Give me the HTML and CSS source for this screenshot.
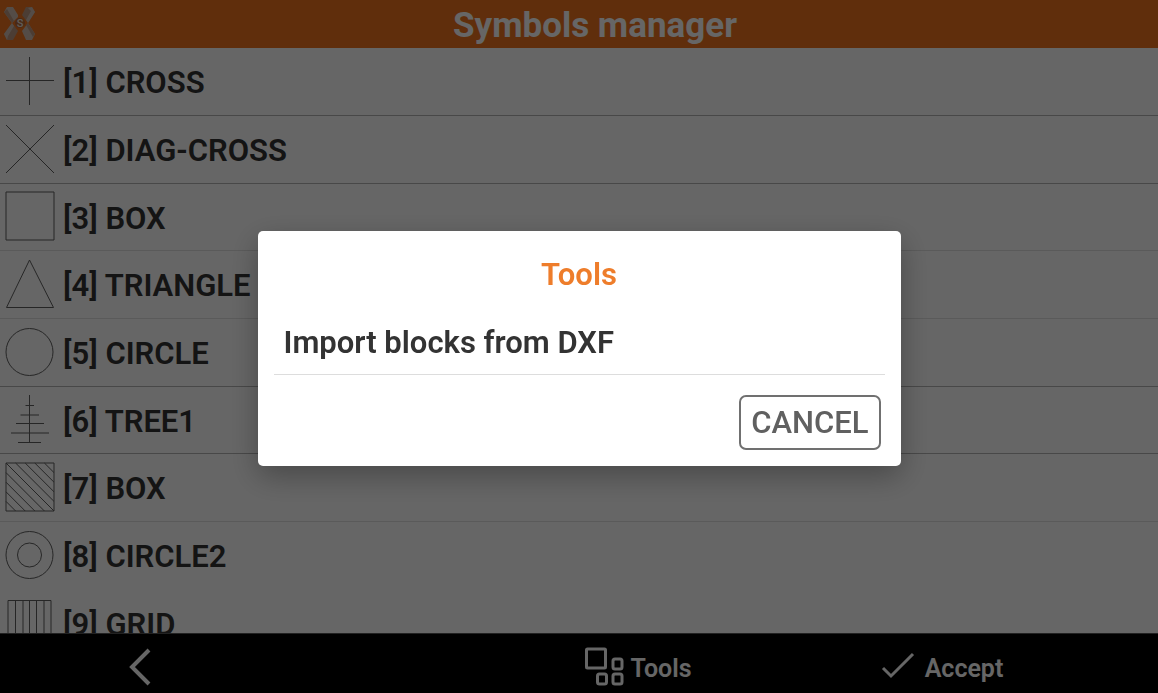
FILE: index.html
```html
<!DOCTYPE html>
<html lang="en">
<head>
    <meta charset="UTF-8">
    <meta name="viewport" content="width=device-width, initial-scale=1.0">
    <title>Symbols manager</title>
    <link rel="stylesheet" href="styles.css">
</head>
<body>
    <div class="app">
        <header class="header">
            <svg class="logo" viewBox="0 0 40 40" width="40" height="40">
                <path fill="#d2bfb2" d="M4 12L7 7H13L18 15V17L12 23Z"/>
                <path fill="#bd9a83" d="M4 12L7 9L14 21L12 23Z"/>
                <path fill="#bd9a83" d="M22 15L26 7H32L35 12L28 23Z"/>
                <path fill="#d2bfb2" d="M28 8L32 7L35 12L28 23L26 20L31 11Z"/>
                <path fill="#bd9a83" d="M12 23L18 31L13 40H7L4 34Z"/>
                <path fill="#d2bfb2" d="M12 23L14 26L8 36L7 40L4 34Z"/>
                <path fill="#d2bfb2" d="M28 23L35 34L32 40H26L22 31Z"/>
                <path fill="#bd9a83" d="M26 25L28 23L35 34L33 37Z"/>
                <circle cx="20" cy="23" r="5" fill="#b5683a"/>
                <text class="logo-text" x="20" y="27" text-anchor="middle">S</text>
            </svg>
            <h1 class="title">Symbols manager</h1>
        </header>

        <ul class="symbols">
            <li class="symbol">
                <svg class="icon" viewBox="0 0 50 50"><path d="M1 24.500H49M24.500 1V49"/></svg>
                <span>[1] CROSS</span>
            </li>
            <li class="symbol">
                <svg class="icon" viewBox="0 0 50 50"><path d="M1 1L49 49M49 1L1 49"/></svg>
                <span>[2] DIAG-CROSS</span>
            </li>
            <li class="symbol light">
                <svg class="icon" viewBox="0 0 50 50"><path d="M1 1H49V49H1Z"/></svg>
                <span>[3] BOX</span>
            </li>
            <li class="symbol light">
                <svg class="icon" viewBox="0 0 50 50"><path d="M24.500 1L48.500 48.500H1.500Z"/></svg>
                <span>[4] TRIANGLE</span>
            </li>
            <li class="symbol">
                <svg class="icon" viewBox="0 0 50 50"><circle cx="24.500" cy="25" r="23.500"/></svg>
                <span>[5] CIRCLE</span>
            </li>
            <li class="symbol">
                <svg class="icon" viewBox="0 0 50 50"><path d="M24.500 1V49M20.500 11.500H29M15.500 21H34M11 29.500H39M6 39H44M13 48.500H36"/></svg>
                <span>[6] TREE1</span>
            </li>
            <li class="symbol light">
                <svg class="icon" viewBox="0 0 50 50"><path d="M1 1H49V49H1ZM1 1L49 49M10.600 1L49 39.400M20.200 1L49 29.800M29.800 1L49 20.200M39.400 1L49 10.600M1 10.600L39.400 49M1 20.200L29.800 49M1 29.800L20.200 49M1 39.400L10.600 49"/></svg>
                <span>[7] BOX</span>
            </li>
            <li class="symbol plain">
                <svg class="icon" viewBox="0 0 50 50"><circle cx="24.500" cy="25" r="23.500"/><circle cx="24.500" cy="25" r="12"/></svg>
                <span>[8] CIRCLE2</span>
            </li>
            <li class="symbol">
                <svg class="icon" viewBox="0 0 50 50"><path d="M3 3.500H46V46.500H3ZM10.500 3.500V46.500M18 3.500V46.500M24.500 3.500V46.500M31.500 3.500V46.500M39 3.500V46.500"/></svg>
                <span>[9] GRID</span>
            </li>
        </ul>

        <footer class="toolbar">
            <button class="tool back" type="button" aria-label="Back">
                <svg viewBox="0 0 24 40" width="24" height="40"><path d="M21 3L4 20L21 37" stroke-width="4"/></svg>
            </button>
            <button class="tool tools" type="button">
                <svg viewBox="0 0 40 40" width="40" height="40" stroke-width="3">
                    <rect x="2.500" y="2" width="19" height="19" rx="1"/>
                    <rect x="29" y="12" width="9" height="10" rx="2"/>
                    <rect x="13.500" y="27" width="9" height="10" rx="2"/>
                    <rect x="29" y="27" width="9" height="10" rx="2"/>
                </svg>
                <span>Tools</span>
            </button>
            <button class="tool accept" type="button">
                <svg viewBox="0 0 34 40" width="34" height="40"><path d="M2 21L10 29L32 7" stroke-width="3"/></svg>
                <span>Accept</span>
            </button>
        </footer>
    </div>

    <div class="overlay">
        <div class="dialog" role="dialog" aria-labelledby="dialogTitle">
            <h2 class="dialog-title" id="dialogTitle">Tools</h2>
            <button class="option" type="button">Import blocks from DXF</button>
            <div class="actions">
                <button class="cancel" type="button">CANCEL</button>
            </div>
        </div>
    </div>
</body>
</html>
```
FILE: styles.css
```css
* {
    box-sizing: border-box;
}
body {
    margin: 0;
    font-family: Roboto, sans-serif;
    font-weight: 600;
    background: #fff;
}
button {
    font-family: inherit;
    font-weight: 600;
    cursor: pointer;
}
.app {
    display: flex;
    flex-direction: column;
    height: 100vh;
}

/* Header */
.header {
    display: grid;
    grid-template-columns: 40px 1fr 8px;
    align-items: center;
    height: 48px;
    flex-shrink: 0;
    background: #f0741e;
}
.logo {
    align-self: start;
}
.logo-text {
    font-size: 11px;
    font-weight: 500;
    fill: #f0e6df;
}
.title {
    margin: 0;
    padding-top: 2px;
    font-size: 35px;
    line-height: 48px;
    font-weight: 700;
    text-align: center;
    color: #fff;
}

/* Symbol list */
.symbols {
    flex: 1;
    min-height: 0;
    margin: 0;
    padding: 0;
    list-style: none;
    overflow: hidden;
}
.symbol {
    display: flex;
    align-items: center;
    gap: 8px;
    height: 68px;
    padding: 0 0 2px 5px;
    border-bottom: 1px solid #b4b4b4;
    font-size: 31px;
    color: #343434;
}
.symbol:nth-child(3n) {
    height: 67px;
}
.symbol.light {
    border-bottom-color: #e2e2e2;
}
.symbol.plain {
    border-bottom-color: transparent;
}
.symbol span {
    padding-top: 4px;
}
.icon {
    width: 50px;
    height: 50px;
    fill: none;
    stroke: #606060;
    stroke-width: 1;
}

/* Bottom bar */
.toolbar {
    display: grid;
    grid-template-columns: 280fr 206fr 304fr 304fr 64fr;
    height: 60px;
    flex-shrink: 0;
    background: #000;
    border-top: 1px solid #555;
}
.tool {
    display: flex;
    align-items: center;
    justify-content: center;
    gap: 6px;
    padding: 6px 0 0;
    border: none;
    background: none;
    color: #fff;
    font-size: 25px;
}
.tool span {
    padding-top: 3px;
}
.tool svg {
    fill: none;
    stroke: #fff;
}
.tools {
    grid-column: 3;
}
.accept {
    gap: 10px;
}

/* Dialog */
.overlay {
    position: fixed;
    inset: 0;
    display: flex;
    align-items: center;
    justify-content: center;
    padding-top: 4px;
    background: rgba(0,0,0,0.6);
}
.dialog {
    width: 643px;
    max-width: 90%;
    padding: 16px;
    background: #fff;
    border-radius: 5px;
    box-shadow: 0 10px 30px rgba(0,0,0,0.3);
}
.dialog-title {
    margin: 0;
    font-size: 31px;
    line-height: 56px;
    font-weight: 600;
    text-align: center;
    color: #ee7d2b;
}
.option {
    display: block;
    width: 100%;
    height: 72px;
    padding: 8px 10px 0;
    border: none;
    border-bottom: 1px solid #ddd;
    background: none;
    font-size: 31px;
    text-align: left;
    color: #333;
}
.actions {
    display: flex;
    justify-content: flex-end;
    padding: 20px 4px 0 0;
}
.cancel {
    height: 55px;
    padding: 0 10px;
    border: 2px solid #707070;
    border-radius: 7px;
    background: #fff;
    font-size: 31px;
    font-weight: 500;
    color: #606060;
}
```
